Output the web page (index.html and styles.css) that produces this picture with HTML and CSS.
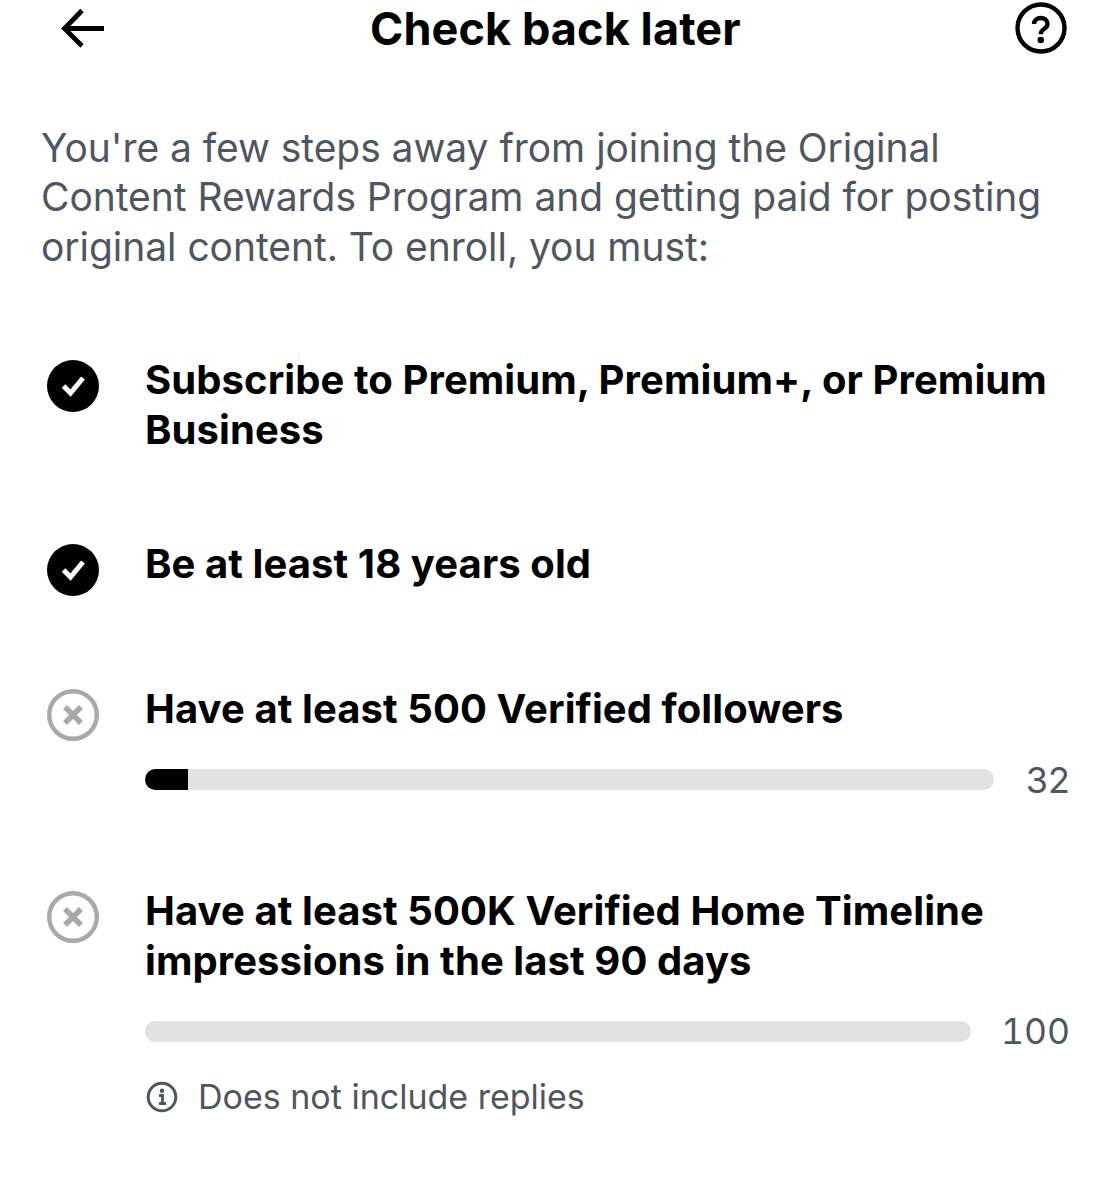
FILE: index.html
```html
<!DOCTYPE html>
<html lang="en">
<head>
<meta charset="utf-8">
<title>Check back later</title>
<link rel="stylesheet" href="styles.css">
</head>
<body>
<main class="page">
  <header class="header">
    <svg class="icon-back" viewBox="0 0 44 40" aria-hidden="true"><path d="M43 20.500H5M21 2.500 3.500 20.500 21 38" fill="none" stroke="#000" stroke-width="4.800"/></svg>
    <h1 class="title">Check back later</h1>
    <svg class="icon-help" viewBox="0 0 52 52" aria-hidden="true"><circle cx="26" cy="26" r="23.500" fill="none" stroke="#000" stroke-width="4.400"/><path d="M19 22c0-3.800 3-6 6.700-6s6.800 2.200 6.800 5.700c0 2.600-1.500 4-3.500 5.300-2.300 1.500-3.200 2.600-3.200 5.200" fill="none" stroke="#000" stroke-width="4.400"/><circle cx="25.800" cy="38" r="3.300"/></svg>
  </header>
  <p class="intro">You're a few steps away from joining the Original Content Rewards Program and getting paid for posting original content. To enroll, you must:</p>
  <ul class="reqs">
    <li class="req req-first">
      <svg class="status" viewBox="0 0 52 52" aria-hidden="true"><circle cx="26" cy="26" r="26"/><path d="M16.500 26l7 7L36 18" fill="none" stroke="#fff" stroke-width="5"/></svg>
      <div class="req-body"><div class="req-text">Subscribe to Premium, Premium+, or Premium Business</div></div>
    </li>
    <li class="req req-second">
      <svg class="status" viewBox="0 0 52 52" aria-hidden="true"><circle cx="26" cy="26" r="26"/><path d="M16.500 26l7 7L36 18" fill="none" stroke="#fff" stroke-width="5"/></svg>
      <div class="req-body"><div class="req-text">Be at least 18 years old</div></div>
    </li>
    <li class="req req-third">
      <svg class="status" viewBox="0 0 52 52" aria-hidden="true"><circle cx="26" cy="26" r="23.800" fill="none" stroke="#a9a9a9" stroke-width="4.400"/><path d="M18 18l16 16M34 18 18 34" fill="none" stroke="#a9a9a9" stroke-width="5.600"/></svg>
      <div class="req-body">
        <div class="req-text">Have at least 500 Verified followers</div>
        <div class="progress"><div class="track"><div class="fill"></div></div><span class="count">32</span></div>
      </div>
    </li>
    <li class="req req-fourth">
      <svg class="status" viewBox="0 0 52 52" aria-hidden="true"><circle cx="26" cy="26" r="23.800" fill="none" stroke="#a9a9a9" stroke-width="4.400"/><path d="M18 18l16 16M34 18 18 34" fill="none" stroke="#a9a9a9" stroke-width="5.600"/></svg>
      <div class="req-body">
        <div class="req-text">Have at least 500K Verified Home Timeline impressions in the last 90 days</div>
        <div class="progress"><div class="track"></div><span class="count count-wide">100</span></div>
        <div class="note">
          <svg class="icon-info" viewBox="0 0 32 32" aria-hidden="true"><circle cx="16" cy="16" r="13.800" fill="none" stroke="#4f5660" stroke-width="3"/><circle cx="16" cy="9.800" r="2.200" fill="#4f5660"/><path d="M13 14.500h3.500v7.500M13 22.500h7" fill="none" stroke="#4f5660" stroke-width="2.800"/></svg>
          <span>Does not include replies</span>
        </div>
      </div>
    </li>
  </ul>
</main>
</body>
</html>
```
FILE: styles.css
```css
* { box-sizing: border-box; }
html, body { margin: 0; padding: 0; background: #fff; }
body { font-family: Inter, "Liberation Sans", sans-serif; color: #000; height: 1199px; overflow: hidden; }
.page { padding: 0 44px 0 41px; }
.header { height: 56px; display: flex; align-items: center; justify-content: space-between; position: relative; }
.icon-back { width: 44px; height: 40px; margin-left: 20px; }
.icon-help { width: 52px; height: 52px; margin-right: 3px; }
.title { position: absolute; left: 329px; top: 0; margin: 0; font-size: 45px; line-height: 58px; font-weight: 700; letter-spacing: 0.1px; white-space: nowrap; }
.intro { margin: 66.500px 0 0; font-size: 39px; line-height: 49.500px; color: #4f5660; letter-spacing: -0.05px; width: 1010px; }
.reqs { list-style: none; margin: 83.500px 0 0; padding: 0; }
.req { display: flex; align-items: flex-start; }
.status { width: 52px; height: 52px; flex: none; margin: 5px 0 0 5.500px; }
.req-body { flex: 1; margin-left: 46.500px; min-width: 0; }
.req-text { font-size: 40px; line-height: 50px; font-weight: 700; letter-spacing: 0.08px; }
.req-second { margin-top: 84px; }
.req-third { margin-top: 88px; }
.req-fourth { margin-top: 86px; }
.progress { display: flex; align-items: center; margin-top: 26px; }
.track { flex: 1; height: 21px; border-radius: 11px; background: #e2e2e2; overflow: hidden; }
.fill { width: 43px; height: 100%; background: #000; }
.count { font-size: 36px; line-height: 40px; color: #4f5660; margin-left: 32px; }
.count-wide { font-size: 35.500px; margin-left: 30px; font-variant-numeric: tabular-nums; }
.note { display: flex; align-items: center; margin-top: 23px; font-size: 34px; line-height: 44px; color: #4f5660; }
.icon-info { width: 32px; height: 32px; margin: 0 20px 0 1px; }
```
